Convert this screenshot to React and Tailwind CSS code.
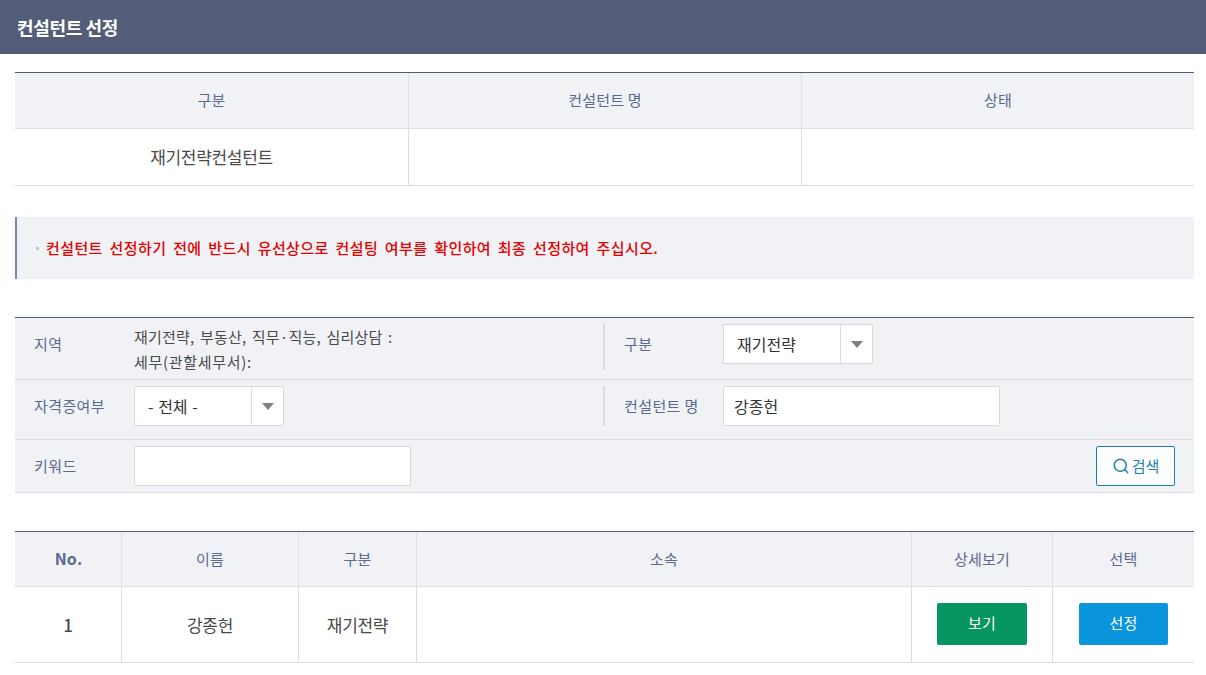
import { Search } from 'lucide-react'

const FONT = "font-['Noto_Sans_CJK_KR','Noto_Sans',sans-serif]"

function SelectBox({ value, width }) {
  return (
    <div className={`flex h-10 ${width} items-stretch rounded-[2px] border border-[#d8d8d8] bg-white`}>
      <span className="flex flex-1 items-center pl-[13px] text-[16px] text-[#333] [word-spacing:1px]">{value}</span>
      <span className="flex w-[32px] items-center justify-center border-l border-[#dcdcdc]">
        <span className="h-0 w-0 border-x-[6px] border-t-[7px] border-x-transparent border-t-[#808080]" />
      </span>
    </div>
  )
}

function FieldLabel({ children, className = '' }) {
  return <span className={`text-[15px] tracking-[0.4px] text-[#5b6a8f] ${className}`}>{children}</span>
}

export default function App() {
  return (
    <div className={`${FONT} min-h-[675px] bg-white pb-3`}>
      <header className="flex h-[54px] items-center bg-[#535d78] pl-[17px] text-[18px] font-bold tracking-[-0.35px] text-white">
        컨설턴트 선정
      </header>

      <div className="ml-[15px] mr-[12px] mt-[18px]">
        {/* selected consultant */}
        <div className="border-t border-[#535d78]">
          <div className="grid h-[56px] grid-cols-[394px_393px_1fr] border-b border-[#dde1e8] bg-[#f0f2f6] text-[15px] tracking-[0.2px] text-[#5b6a8f]">
            <div className="flex items-center justify-center border-r border-[#dde1e8]">구분</div>
            <div className="flex items-center justify-center border-r border-[#dde1e8]">컨설턴트 명</div>
            <div className="flex items-center justify-center">상태</div>
          </div>
          <div className="grid h-[57px] grid-cols-[394px_393px_1fr] border-b border-[#dcdcdc] text-[17px] tracking-[-0.3px] text-[#4a4a4a]">
            <div className="flex items-center justify-center border-r border-[#dcdcdc]">재기전략컨설턴트</div>
            <div className="border-r border-[#dcdcdc]" />
            <div />
          </div>
        </div>

        {/* notice */}
        <div className="mt-[31px] flex h-[62px] items-center gap-[7px] border-l-2 border-[#6f8bab] bg-[#f0f2f6] pl-[19px] text-[15px] font-medium tracking-[0.4px] text-[#e60000] [word-spacing:3px]">
          <span className="h-[3px] w-[3px] bg-[#c4c4c4]" />
          컨설턴트 선정하기 전에 반드시 유선상으로 컨설팅 여부를 확인하여 최종 선정하여 주십시오.
        </div>

        {/* search form */}
        <div className="mt-[38px] border-t border-[#535d78] bg-[#f0f2f6]">
          <div className="flex h-[62px] items-start border-b border-[#dcdee3] pt-[6px]">
            <div className="flex w-[588px] items-start">
              <FieldLabel className="w-[119px] pl-[19px] leading-10">지역</FieldLabel>
              <div className="text-[15px] leading-[25px] tracking-[0.2px] text-[#4a4a4a] [word-spacing:2px]">
                <p>재기전략, 부동산, 직무·직능, 심리상담 :</p>
                <p className="tracking-[0.7px]">세무(관할세무서):</p>
              </div>
            </div>
            <div className="flex h-[46px] items-start border-l-2 border-[#dcdcdc]">
              <FieldLabel className="w-[118px] pl-[19px] leading-10">구분</FieldLabel>
              <SelectBox value="재기전략" width="w-[150px]" />
            </div>
          </div>

          <div className="flex h-[60px] items-start border-b border-[#dcdee3] pt-[6px]">
            <div className="flex w-[588px] items-center">
              <FieldLabel className="w-[119px] pl-[19px]">자격증여부</FieldLabel>
              <SelectBox value="- 전체 -" width="w-[150px]" />
            </div>
            <div className="flex h-[40px] items-center border-l-2 border-[#dcdcdc]">
              <FieldLabel className="w-[118px] pl-[19px]">컨설턴트 명</FieldLabel>
              <div className="flex h-10 w-[277px] items-center rounded-[2px] border border-[#d8d8d8] bg-white pl-[10px] text-[16px] text-[#333]">
                강종헌
              </div>
            </div>
          </div>

          <div className="flex h-[53px] items-center border-b border-[#dcdee3] pr-[19px]">
            <FieldLabel className="w-[119px] pl-[19px]">키워드</FieldLabel>
            <div className="h-10 w-[277px] rounded-[2px] border border-[#d8d8d8] bg-white" />
            <button className="ml-auto flex h-10 w-[79px] items-center justify-center gap-[2px] rounded-[2px] border border-[#1d80ab] bg-white text-[15px] text-[#1d80ab]">
              <Search size={18} strokeWidth={2} />
              검색
            </button>
          </div>
        </div>

        {/* results */}
        <div className="mt-[38px] border-t border-[#535d78]">
          <div className="grid h-[55px] grid-cols-[107px_177px_118px_495px_141px_1fr] border-b border-[#dde1e8] bg-[#f0f2f6] text-[15px] tracking-[0.2px] text-[#5b6a8f]">
            <div className="flex items-center justify-center border-r border-[#dde1e8] pb-[2px] pl-[1px] text-[16px] font-bold">No.</div>
            <div className="flex items-center justify-center border-r border-[#dde1e8]">이름</div>
            <div className="flex items-center justify-center border-r border-[#dde1e8]">구분</div>
            <div className="flex items-center justify-center border-r border-[#dde1e8]">소속</div>
            <div className="flex items-center justify-center border-r border-[#dde1e8]">상세보기</div>
            <div className="flex items-center justify-center">선택</div>
          </div>
          <div className="grid h-[76px] grid-cols-[107px_177px_118px_495px_141px_1fr] border-b border-[#dcdcdc] text-[17px] tracking-[-0.3px] text-[#4a4a4a]">
            <div className="flex items-center justify-center border-r border-[#dcdcdc] font-medium">1</div>
            <div className="flex items-center justify-center border-r border-[#dcdcdc]">강종헌</div>
            <div className="flex items-center justify-center border-r border-[#dcdcdc]">재기전략</div>
            <div className="border-r border-[#dcdcdc]" />
            <div className="flex items-center justify-center border-r border-[#dcdcdc] pb-[2px]">
              <button className="h-[42px] w-[90px] rounded-[2px] bg-[#069661] text-[15px] tracking-[0.2px] text-white">보기</button>
            </div>
            <div className="flex items-center justify-center pb-[2px]">
              <button className="h-[42px] w-[89px] rounded-[2px] bg-[#0a94dc] text-[15px] tracking-[0.2px] text-white">선정</button>
            </div>
          </div>
        </div>
      </div>
    </div>
  )
}
